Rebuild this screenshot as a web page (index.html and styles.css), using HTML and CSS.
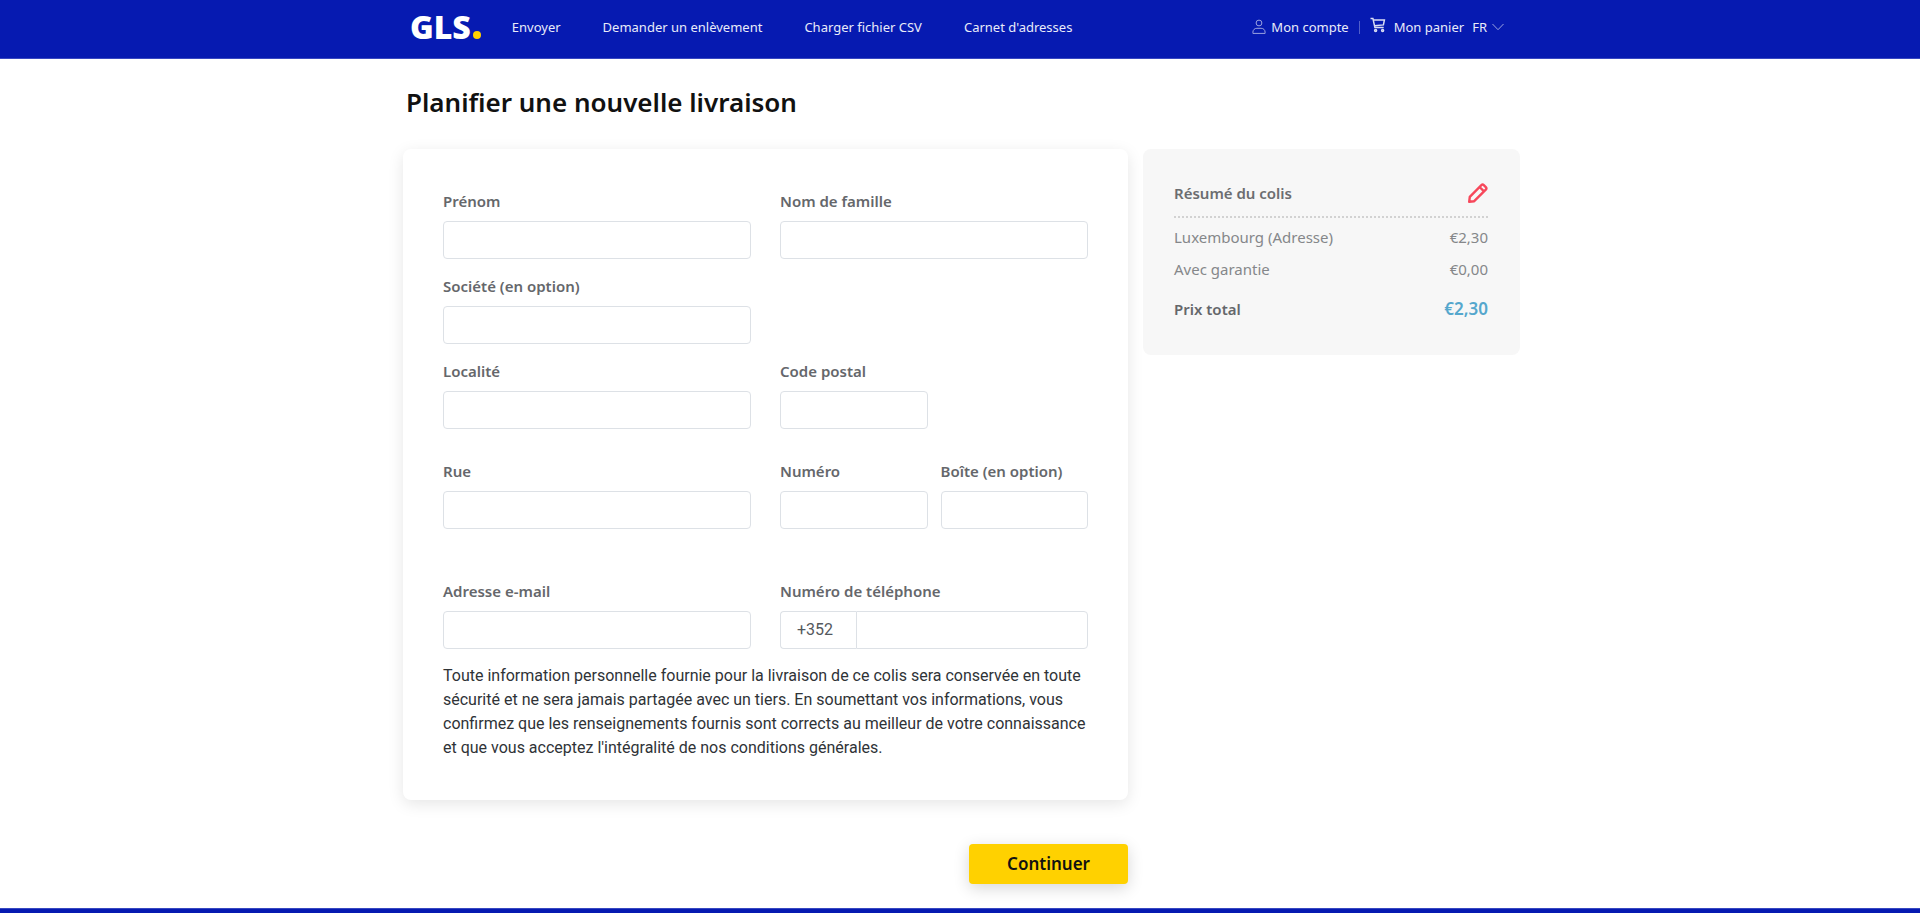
FILE: index.html
```html
<!DOCTYPE html>
<html lang="fr">
<head>
<meta charset="utf-8">
<meta name="viewport" content="width=device-width, initial-scale=1">
<title>GLS - Planifier une nouvelle livraison</title>
<link rel="stylesheet" href="styles.css">
</head>
<body>
<header class="header">
  <div class="header-inner">
    <a class="logo" href="#" aria-label="GLS">GLS<span class="logo-dot"></span></a>
    <nav class="nav">
      <a href="#">Envoyer</a>
      <a href="#">Demander un enlèvement</a>
      <a href="#">Charger fichier CSV</a>
      <a href="#">Carnet d'adresses</a>
    </nav>
    <div class="tools">
      <a class="account" href="#">
        <svg class="icon-user" width="14" height="16" viewBox="0 0 14 16" fill="none" stroke="#fff" stroke-width="1"><circle cx="7" cy="4" r="2.9"/><path d="M.9 14.4v-1.2c0-2.3 1.7-3.9 4-3.9h4.2c2.3 0 4 1.6 4 3.9v1.2z"/></svg>
        Mon compte
      </a>
      <span class="divider"></span>
      <a class="cart" href="#">
        <svg class="icon-cart" width="16" height="16" viewBox="0 0 16 16" fill="none" stroke="#fff" stroke-width="1.5"><path d="M.5 1.4h2.4l2 9.2h8.8M3.2 3h11.2l-1 4.9-9.2.9"/><circle cx="5.6" cy="13.4" r="1"/><circle cx="12.6" cy="13.4" r="1"/></svg>
        Mon panier
      </a>
      <button class="lang" type="button">FR
        <svg class="icon-chevron" width="12" height="8" viewBox="0 0 12 8" fill="none" stroke="#fff"><path d="M.5 1 6 6.7 11.5 1"/></svg>
      </button>
    </div>
  </div>
</header>

<main class="page">
  <h1 class="title">Planifier une nouvelle livraison</h1>
  <div class="columns">
    <form class="form">
      <div class="card">
        <div class="row">
          <div class="field"><label for="first">Prénom</label><input id="first" type="text"></div>
          <div class="field"><label for="last">Nom de famille</label><input id="last" type="text"></div>
        </div>
        <div class="row">
          <div class="field"><label for="company">Société (en option)</label><input id="company" type="text"></div>
        </div>
        <div class="row">
          <div class="field"><label for="city">Localité</label><input id="city" type="text"></div>
          <div class="pair">
            <div class="field"><label for="zip">Code postal</label><input id="zip" type="text"></div>
          </div>
        </div>
        <div class="row row-street">
          <div class="field"><label for="street">Rue</label><input id="street" type="text"></div>
          <div class="pair">
            <div class="field"><label for="number">Numéro</label><input id="number" type="text"></div>
            <div class="field"><label for="box">Boîte (en option)</label><input id="box" type="text"></div>
          </div>
        </div>
        <div class="row row-contact">
          <div class="field"><label for="email">Adresse e-mail</label><input id="email" type="email"></div>
          <div class="field"><label for="phone">Numéro de téléphone</label>
            <div class="phone"><span class="prefix">+352</span><input id="phone" type="tel"></div>
          </div>
        </div>
        <p class="notice">Toute information personnelle fournie pour la livraison de ce colis sera conservée en toute sécurité et ne sera jamais partagée avec un tiers. En soumettant vos informations, vous confirmez que les renseignements fournis sont corrects au meilleur de votre connaissance et que vous acceptez l'intégralité de nos conditions générales.</p>
      </div>
      <button class="continue" type="submit">Continuer</button>
    </form>

    <aside class="summary">
      <div class="summary-head">
        <h2>Résumé du colis</h2>
        <button class="edit" type="button" aria-label="Modifier">
          <svg width="20" height="20" viewBox="0 0 20 20" fill="none" stroke="#f7485b" stroke-width="2.4" stroke-linejoin="round"><path d="M1.2 18.8l.6-5L13.4 2.2a1.7 1.7 0 0 1 2.4 0l2 2a1.7 1.7 0 0 1 0 2.4L6.2 18.2zM11.6 4l4.4 4.4"/></svg>
        </button>
      </div>
      <div class="line"><span>Luxembourg (Adresse)</span><span>€2,30</span></div>
      <div class="line"><span>Avec garantie</span><span>€0,00</span></div>
      <div class="line total"><span>Prix total</span><span class="price">€2,30</span></div>
    </aside>
  </div>
</main>
<footer class="footer"></footer>
</body>
</html>
```
FILE: styles.css
```css
* {
  box-sizing: border-box;
}

body {
  margin: 0;
  min-height: 100vh;
  display: flex;
  flex-direction: column;
  background: #fff;
  color: #2f3337;
  font: 16px/24px "Noto Sans", sans-serif;
}

a {
  color: inherit;
  text-decoration: none;
}

button {
  padding: 0;
  border: 0;
  background: none;
  color: inherit;
  font: inherit;
  cursor: pointer;
}

.header {
  background: #061ab1;
  border-bottom: 1px solid #3848c1;
  color: #e9ebf9;
  font-size: 13px;
  line-height: 20px;
}

.header-inner {
  display: flex;
  align-items: center;
  max-width: 1140px;
  height: 58px;
  margin: 0 auto;
  padding: 0 26px 4px 20px;
}

.logo {
  display: flex;
  align-items: baseline;
  gap: 2px;
  margin-right: 31px;
  color: #fff;
  font: 800 32px/32px "Open Sans", sans-serif;
}

.logo-dot {
  width: 8px;
  height: 8px;
  border-radius: 50%;
  background: #ffd100;
}

.nav {
  display: flex;
  gap: 42px;
}

.tools {
  display: flex;
  align-items: center;
  margin-left: auto;
}

.account,
.cart,
.lang {
  display: flex;
  align-items: center;
  gap: 5px;
}

.icon-user,
.icon-chevron {
  opacity: 0.6;
}

.icon-cart {
  margin-bottom: 4px;
  opacity: 0.85;
}

.divider {
  width: 1px;
  height: 13px;
  margin: 0 10px;
  background: #515fc9;
}

.cart {
  gap: 8px;
}

.lang {
  gap: 5px;
  margin-left: 8px;
}

.page {
  width: 100%;
  max-width: 1140px;
  margin: 0 auto;
  padding: 0 10px 24px 13px;
  flex: 1;
}

.title {
  margin: 23px 3px 27px;
  color: #111;
  font-size: 26px;
  font-weight: 600;
  line-height: 40px;
}

.columns {
  display: grid;
  grid-template-columns: 725fr 377fr;
  align-items: start;
  gap: 15px;
}

.form {
  display: flex;
  flex-direction: column;
  gap: 44px;
}

.card {
  padding: 40px;
  border-radius: 8px;
  background: #fff;
  box-shadow: 0 4px 16px rgba(0, 0, 0, 0.1);
}

.row {
  display: grid;
  grid-template-columns: 1fr 1fr;
  gap: 29px;
  margin-bottom: 15px;
}

.row-street {
  margin-top: 30px;
}

.row-contact {
  margin-top: 50px;
}

.pair {
  display: grid;
  grid-template-columns: 1fr 1fr;
  gap: 13px;
}

.field {
  display: flex;
  flex-direction: column;
  gap: 8px;
  min-width: 0;
}

label {
  color: #65676b;
  font-size: 15px;
  font-weight: 600;
}

input {
  width: 100%;
  height: 38px;
  padding: 6px 12px;
  border: 1px solid #dde1e6;
  border-radius: 4px;
  background: #fff;
  color: #495057;
  font: 16px/24px Roboto, sans-serif;
}

.phone {
  display: flex;
}

.prefix {
  padding: 6px 23px 6px 16px;
  border: 1px solid #dde1e6;
  border-right: 0;
  border-radius: 4px 0 0 4px;
  color: #54585d;
  font-family: Roboto, sans-serif;
}

.phone input {
  flex: 1;
  min-width: 0;
  border-radius: 0 4px 4px 0;
}

.notice {
  margin: 0;
  font: 16px/24px Roboto, sans-serif;
}

.continue {
  align-self: flex-end;
  padding: 8px 38px;
  border-radius: 4px;
  background: #ffd100;
  box-shadow: 0 4px 16px rgba(0, 0, 0, 0.16);
  color: #111;
  font-size: 17px;
  font-weight: 600;
}

.summary {
  padding: 32px 32px 30px 31px;
  border-radius: 8px;
  background: #f7f7f7;
  color: #85878a;
  font-size: 15px;
}

.summary-head {
  display: flex;
  justify-content: space-between;
  align-items: center;
  margin-bottom: 3px;
  padding-bottom: 11px;
  border-bottom: 2px dotted #d2d2d2;
}

.summary h2 {
  margin: 0;
  color: #6b6d70;
  font-size: 15px;
  font-weight: 600;
}

.edit {
  display: flex;
}

.line {
  display: flex;
  justify-content: space-between;
  padding: 4px 0;
}

.total {
  margin-top: 8px;
  color: #65676b;
  font-weight: 600;
}

.price {
  color: #55a7cd;
  font-size: 17px;
}

.footer {
  min-height: 5px;
  border-top: 1px solid #3848c1;
  background: #061ab1;
}
```
